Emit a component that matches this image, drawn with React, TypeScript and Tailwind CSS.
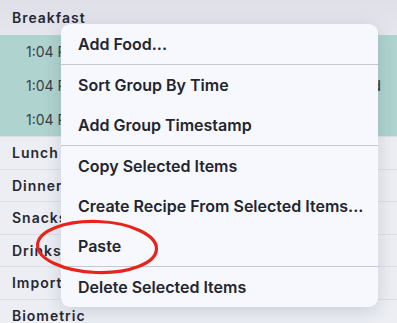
const sections = ["Lunch", "Dinner", "Snacks", "Drinks", "Imported", "Biometric"];

const menu: (string | null)[] = [
  "Add Food...",
  null,
  "Sort Group By Time",
  "Add Group Timestamp",
  null,
  "Copy Selected Items",
  "Create Recipe From Selected Items...",
  "Paste",
  null,
  "Delete Selected Items",
];

export default function App() {
  return (
    <div
      className="relative h-[323px] w-[397px] overflow-hidden bg-[#eceef4] text-[#262833]"
      style={{ fontFamily: "Inter, 'Noto Sans', sans-serif" }}
    >
      {/* diary list behind the menu */}
      <div className="flex h-[35px] items-center bg-gradient-to-b from-[#dfe0e7] to-[#e6e7ee] px-3 text-[14px] font-semibold tracking-[0.07em]">
        Breakfast
      </div>
      <div className="bg-[#afd3cf]">
        {["", "Scrambled", ""].map((right, i) => (
          <div key={i} className="flex h-[33.7px] items-center justify-between pl-[26px] pr-[16px] text-[14px] text-[#3a3d48]">
            <span>1:04 PM</span>
            <span className="font-medium">{right}</span>
          </div>
        ))}
      </div>
      {sections.map((name) => (
        <div
          key={name}
          className="flex h-[32.5px] items-center border-t border-[#dcdee6] px-3 text-[14px] font-semibold tracking-[0.07em]"
        >
          {name}
        </div>
      ))}

      {/* context menu */}
      <div className="absolute left-[61px] top-[24px] w-[317px] overflow-hidden rounded-[9px] bg-[#f7f8fd] shadow-[0_4px_18px_rgba(40,44,70,0.16)]">
        {menu.map((item, i) =>
          item === null ? (
            <div key={i} className="h-px bg-[#c7c8cf]" />
          ) : (
            <div key={i} className="flex h-10 items-center pl-[17px] text-[16px] font-semibold text-[#23252e]">
              {item}
            </div>
          )
        )}
      </div>

      {/* highlight ring */}
      <svg className="absolute left-[34px] top-[218px]" width="128" height="58" viewBox="0 0 128 58">
        <ellipse cx="63" cy="29" rx="59.5" ry="25.5" fill="none" stroke="#e8241a" strokeWidth="3.2" transform="rotate(2 63 29)" />
      </svg>
    </div>
  );
}
